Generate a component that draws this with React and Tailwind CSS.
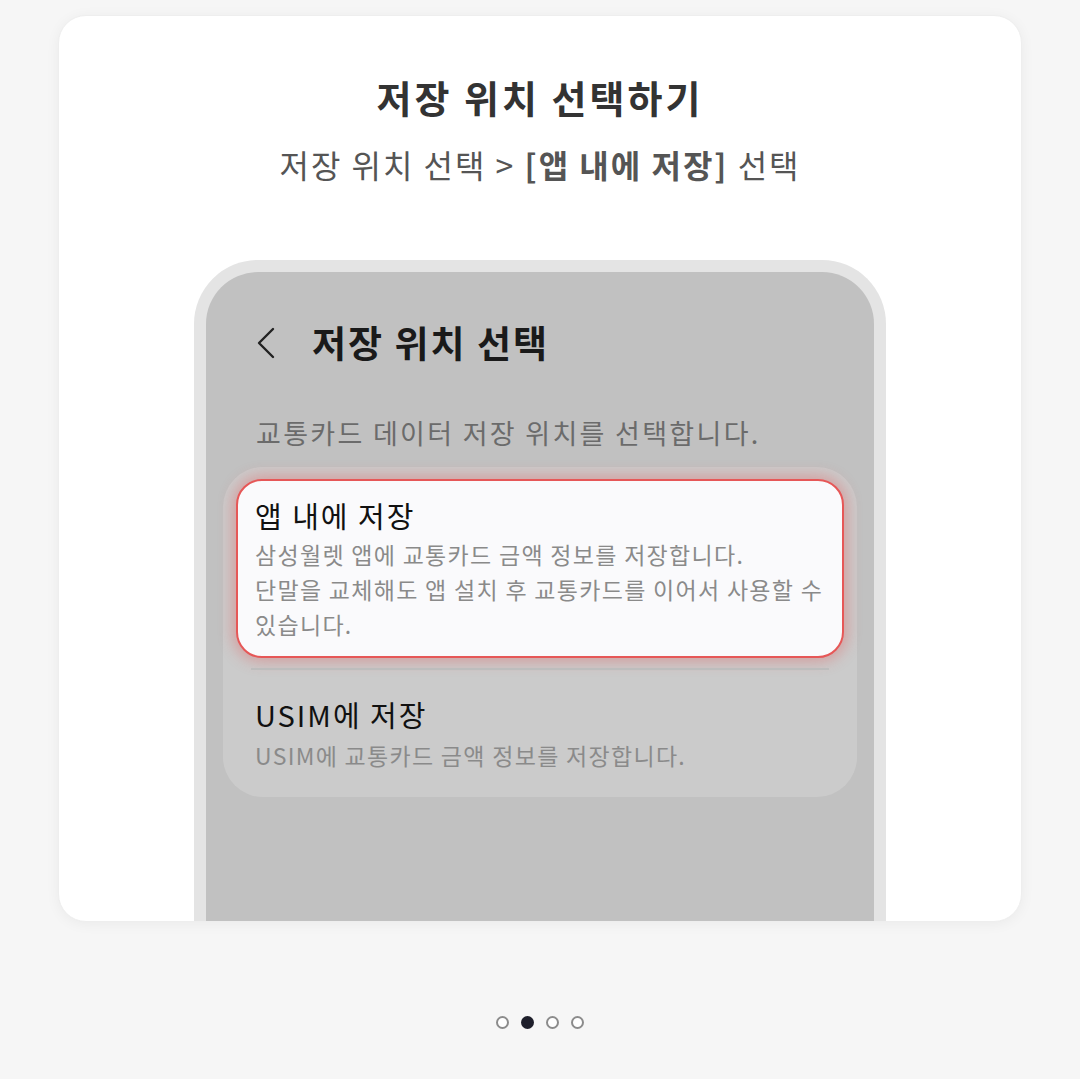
const font = { fontFamily: '"Noto Sans CJK KR", "Noto Sans", sans-serif' }

function Dots({ active = 1, count = 4 }) {
    return (
        <div className="flex items-center justify-center gap-3">
            {[...Array(count)].map((_, i) => (
                <span
                    key={i}
                    className={
                        i === active
                            ? 'w-[13px] h-[13px] rounded-full bg-[#1e1f2b]'
                            : 'w-[13px] h-[13px] rounded-full border-2 border-[#8c8c8c] bg-white'
                    }
                ></span>
            ))}
        </div>
    )
}

function BackArrow() {
    return (
        <svg width="20" height="32" viewBox="0 0 20 32" fill="none" stroke="#222" strokeWidth="2.4" strokeLinecap="round" strokeLinejoin="round">
            <polyline points="17,2 3,16 17,30" />
        </svg>
    )
}

function PhoneScreen() {
    return (
        <div className="mx-auto w-[692px] h-[720px] border-[12px] border-b-0 border-[#e4e4e4] rounded-t-[64px] bg-[#c1c1c1] overflow-hidden">
            <div className="flex items-center pl-[50px] pt-[50px] h-[92px]">
                <BackArrow />
                <h2 className="ml-[36px] text-[37px] font-bold text-[#1a1a1a] tracking-[2px]">저장 위치 선택</h2>
            </div>

            <p className="pl-[50px] mt-[52px] text-[27px] text-[#6b6b6b] tracking-[2.3px] leading-[34px]">
                교통카드 데이터 저장 위치를 선택합니다.
            </p>

            <div className="mx-[17px] mt-[17px] bg-[#cbcbcb] rounded-[40px] pt-[12px] pb-[24px] px-[13px]">
                <div className="bg-[#fafafc] border-2 border-[#e65757] rounded-[26px] pl-[17px] pr-[14px] pt-[16px] pb-[14px] shadow-[0_0_14px_4px_rgba(230,80,80,0.35)]">
                    <p className="text-[29px] text-[#111] leading-[36px] tracking-[2px]">앱 내에 저장</p>
                    <div className="mt-[4px] text-[23px] text-[#8a8a8a] leading-[35px] tracking-[1.3px]">
                        <p>삼성월렛 앱에 교통카드 금액 정보를 저장합니다.</p>
                        <p>단말을 교체해도 앱 설치 후 교통카드를 이어서 사용할 수 있습니다.</p>
                    </div>
                </div>
                <div className="mx-[15px] mt-[10px] h-[2px] bg-[#bdbdbd]"></div>
                <div className="pl-[19px] pt-[26px]">
                    <p className="text-[29px] text-[#111] leading-[36px] tracking-[2px]">USIM에 저장</p>
                    <p className="mt-[6px] text-[23px] text-[#8a8a8a] leading-[35px] tracking-[1.3px]">USIM에 교통카드 금액 정보를 저장합니다.</p>
                </div>
            </div>
        </div>
    )
}

export default function App() {
    return (
        <div className="min-h-[1079px] bg-[#f6f6f6] pt-[15px] px-[58px]" style={font}>
            <div className="h-[907px] bg-white rounded-[28px] overflow-hidden shadow-[0_2px_14px_rgba(0,0,0,0.05)] border border-[#eeeeee]">
                <div className="pt-[56px] text-center">
                    <h1 className="text-[38px] font-bold text-[#333] leading-[50px] tracking-[3px]">저장 위치 선택하기</h1>
                    <p className="mt-[22px] text-[32px] text-[#555] leading-[40px] tracking-[2px]">
                        저장 위치 선택 &gt; <span className="font-bold">[앱 내에 저장]</span> 선택
                    </p>
                </div>
                <div className="mt-[76px]">
                    <PhoneScreen />
                </div>
            </div>
            <div className="mt-[94px]">
                <Dots />
            </div>
        </div>
    )
}
